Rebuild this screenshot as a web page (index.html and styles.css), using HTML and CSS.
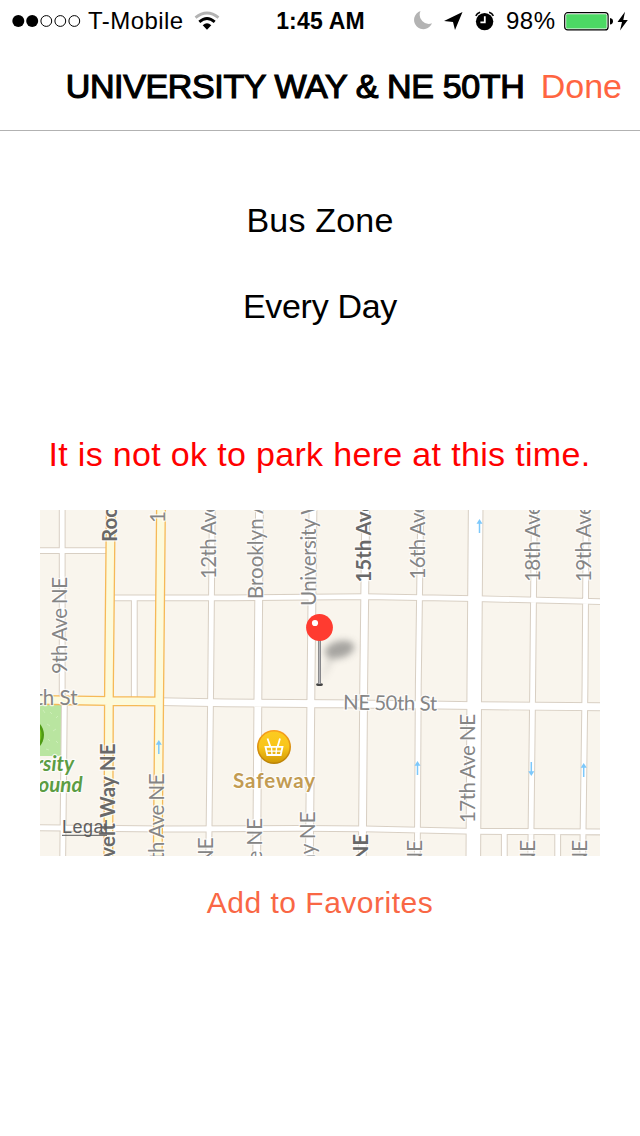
FILE: index.html
```html
<!DOCTYPE html>
<html lang="en">
<head>
<meta charset="utf-8">
<title>University Way &amp; NE 50th</title>
<link rel="stylesheet" href="styles.css">
</head>
<body>
<div class="status">
  <div class="status-left">
    <svg class="signal" width="70" height="14" viewBox="0 0 70 14"><circle cx="6.3" cy="7" r="6"/><circle cx="20.2" cy="7" r="6"/><g fill="none" stroke="#000"><circle cx="34.3" cy="7" r="5.4"/><circle cx="48.3" cy="7" r="5.4"/><circle cx="62.3" cy="7" r="5.4"/></g></svg>
    <span class="carrier">T-Mobile</span>
    <svg class="wifi" width="26" height="20" viewBox="0 0 26 20"><g fill="none"><path d="M1.5 6.7Q13-2.7 24.5 6.7" stroke="#b3b3b3" stroke-width="2.8"/><path d="M5.3 10.9Q13 4 20.7 10.9" stroke="#000" stroke-width="2.8"/></g><path d="M8.7 14.2Q13 10.4 17.3 14.2L13 18.7Z"/></svg>
  </div>
  <span class="clock">1:45 AM</span>
  <div class="status-right">
    <svg class="glyphs" width="84" height="22" viewBox="0 0 84 22"><path d="M7.5 1A9.3 9.3 0 1 0 19 13.3A9.2 9.2 0 0 1 7.5 1Z" fill="#b3b3b3"/><path d="M49.5 2L42 20L40 12L31 11Z"/><circle cx="71.6" cy="11.6" r="8.7"/><path d="M62.8 5.9Q64 3 67.1 2.2M80.4 5.9Q79.2 3 76.1 2.2" fill="none" stroke="#000" stroke-width="1.5"/><path d="M71.8 6.2V12.3H67.4" fill="none" stroke="#fff" stroke-width="1.8"/></svg>
    <span class="percent">98%</span>
    <svg class="battery" width="66" height="22" viewBox="0 0 66 22"><rect x=".7" y="2.7" width="43.4" height="17.2" rx="3" fill="#fff" stroke="#000" stroke-width="1.2"/><rect x="2.2" y="4.2" width="40.4" height="14.2" rx="1" fill="#4cd964"/><path d="M46 8Q49 8.5 49 11.3T46 14.6Z"/><path d="M61 1.8L53.5 12H58L56 20.6L63.8 10H59.3Z"/></svg>
  </div>
</div>
<header class="navbar">
  <h1 class="title">UNIVERSITY WAY &amp; NE 50TH</h1>
  <a class="done">Done</a>
</header>
<main class="content">
  <p class="zone">Bus Zone</p>
  <p class="days">Every Day</p>
  <p class="warning">It is not ok to park here at this time.</p>
  <svg class="map" width="560" height="346" viewBox="40 510 560 346">
    <defs>
      <linearGradient id="gold" x1="0" y1="0" x2="0" y2="1"><stop offset="0" stop-color="#fccb20"/><stop offset=".5" stop-color="#f8c51b"/><stop offset="1" stop-color="#d39b05"/></linearGradient>
      <linearGradient id="rim" x1="0" y1="0" x2="0" y2="1"><stop offset="0" stop-color="#fb9f1e"/><stop offset="1" stop-color="#b98205"/></linearGradient>
      <linearGradient id="needle"><stop offset="0" stop-color="#777"/><stop offset=".5" stop-color="#b5b5b9"/><stop offset="1" stop-color="#707074"/></linearGradient>
      <filter id="blur" x="-50%" y="-50%" width="200%" height="200%"><feGaussianBlur stdDeviation="3.8"/></filter>
      <g id="arrow"><path d="M0 14V2" stroke="#7cc8fb" stroke-width="1.5"/><path d="M-3 4.8L0 0L3 4.8Z" fill="#7cc8fb"/></g>
      <g id="streets" fill="none">
        <path class="w4" d="M62.2 505V700M64.4 700L62.7 860M134.3 598V700M212.3 505L210.7 685L208.7 860M420.8 505L418.3 685L417.3 860M534.4 505L532.7 685L530.7 860M586.2 505L585 685L582.7 860M504.3 832V860M557.7 832V860M35 550.6H108M112 597.8H230L365 596.7L475 598.7L605 601.7M35 827.7L163 829L300 828.4L365 828.9L475 831.3L605 832"/>
        <path class="w7" d="M259.5 505L258 685L256.7 860M313 505L311 685L309.4 860M365.8 505L363.7 685L362.3 860M160 701.7L225 702.9L365 704L475 705.7L605 706.8"/>
        <path class="w14" d="M475.7 505L474.3 685L473.3 860"/>
      </g>
      <path id="arterials" fill="none" d="M110.8 505L109 685L108.3 860M161 505L159.3 685L157.7 860M35 699.8L109 701L160 701.5"/>
    </defs>
    <rect x="40" y="510" width="560" height="346" fill="#f9f5ed"/>
    <path d="M40 704H62V756H40Z" fill="#b9e5a0"/>
    <path d="M43 710l2 3m5-1l2 2m4 4l2-2m-11 8l3 2m3 5l3-2m-8 10l2 2m6 0l2 2m-12 6l3 1" stroke="#cdeeb8"/>
    <use href="#streets" class="casing"/>
    <use href="#streets" class="road"/>
    <use href="#arterials" stroke="#f6b957" stroke-width="10"/>
    <use href="#arterials" stroke="#fdfadb" stroke-width="7.4"/>
    <circle cx="27" cy="735" r="17" fill="#4f9a14"/><circle cx="27" cy="735" r="14.5" fill="#75c31d"/>
    <use href="#arrow" x="158.8" y="740"/><use href="#arrow" x="479.5" y="519"/><use href="#arrow" x="417.5" y="761"/><use href="#arrow" x="583.7" y="763"/><use href="#arrow" transform="translate(531.3 776) scale(1 -1)"/>
    <g class="label">
      <text transform="translate(66.5 674) rotate(-90)" textLength="97">9th Ave NE</text>
      <text class="major" transform="translate(116.5 542) rotate(-90)">Roosevelt</text>
      <text transform="translate(165 523) rotate(-90)">11th Ave NE</text>
      <text transform="translate(216.3 579) rotate(-90)" textLength="108">12th Ave NE</text>
      <text transform="translate(263.3 599) rotate(-90)">Brooklyn Ave</text>
      <text transform="translate(316.3 606) rotate(-90)" textLength="131">University Way</text>
      <text class="major" transform="translate(371 582.5) rotate(-90)" textLength="114">15th Ave NE</text>
      <text transform="translate(425 579.5) rotate(-90)" textLength="108">16th Ave NE</text>
      <text transform="translate(539.5 582) rotate(-90)" textLength="109">18th Ave NE</text>
      <text transform="translate(591.3 582) rotate(-90)" textLength="109">19th Ave NE</text>
      <text transform="translate(475.3 823) rotate(-90)" textLength="109">17th Ave NE</text>
      <g class="end">
        <text class="major" transform="translate(114.8 743.5) rotate(-90)" textLength="171">Roosevelt Way NE</text>
        <text transform="translate(163.5 773.5) rotate(-90)" textLength="109">11th Ave NE</text>
        <text transform="translate(213.3 837.5) rotate(-90)">12th Ave NE</text>
        <text transform="translate(262.3 818) rotate(-90)">Brooklyn Ave NE</text>
        <text transform="translate(314.8 811.5) rotate(-90)">University Way NE</text>
        <text class="major" transform="translate(368 834) rotate(-90)">15th Ave NE</text>
        <text transform="translate(422 840) rotate(-90)">16th Ave NE</text>
        <text transform="translate(535.3 840) rotate(-90)">18th Ave NE</text>
        <text transform="translate(587.3 840) rotate(-90)">19th Ave NE</text>
        <text x="77.5" y="705">NE 50th St</text>
      </g>
      <text transform="translate(343 709.5) rotate(.7)" textLength="94">NE 50th St</text>
      <text class="shop" x="233" y="787.5" textLength="82">Safeway</text>
      <text class="park end" x="74" y="771">University</text>
      <text class="park end" x="82.5" y="791.5">Playground</text>
    </g>
    <circle cx="274" cy="747" r="17" fill="url(#rim)"/><circle cx="274" cy="747" r="15.4" fill="url(#gold)"/>
    <path d="M265.5 746.8H282.5L280.7 755H267.3ZM267.5 738.5L270.5 747M280 738.5L277.5 747" fill="none" stroke="#fff" stroke-width="1.8"/><path d="M266 751.1H282M271.5 747L272 755M276.6 747L276 755" stroke="#fff" stroke-width="1.4"/>
    <text class="legal" x="62" y="833" textLength="46">Legal</text><path d="M62 835.3H107" stroke="#555"/>
    <g filter="url(#blur)" fill="#555" opacity=".5"><ellipse cx="339.5" cy="649.5" rx="15" ry="8.5" transform="rotate(-14 339.5 649.5)"/><path d="M329 656L320 684L335 657Z" opacity=".4"/></g>
    <ellipse cx="319.5" cy="684.5" rx="3.4" ry="1.5" fill="#444"/>
    <rect x="318" y="638" width="3" height="46" fill="url(#needle)"/>
    <circle cx="319.5" cy="627.5" r="13.4" fill="#ff3b30"/><circle cx="315" cy="623" r="3.1" fill="#fff"/>
  </svg>
  <a class="favorite">Add to Favorites</a>
</main>
</body>
</html>
```
FILE: styles.css
```css
* { box-sizing: border-box; }
body {
  margin: 0;
  width: 640px;
  height: 1136px;
  overflow: hidden;
  background: #fff;
  color: #000;
  font-family: "Liberation Sans", Arial, sans-serif;
}
.status {
  display: grid;
  grid-template-columns: 1fr auto 1fr;
  align-items: center;
  height: 40px;
  padding: 2px 10px 0 12px;
  font-size: 24px;
  white-space: nowrap;
}
.status-left, .status-right { display: flex; align-items: center; }
.status-right { justify-content: flex-end; }
.signal { margin: 0 6px 1px 0; }
.carrier { width: 99px; margin-right: 7px; letter-spacing: .45px; }
.wifi, .glyphs, .battery { margin-bottom: 1px; }
.clock { margin-right: 1px; font-weight: 700; font-size: 23px; letter-spacing: .2px; }
.glyphs { margin-right: 9px; }
.percent { width: 50px; margin-right: 8px; letter-spacing: .5px; }
.navbar {
  display: flex;
  justify-content: flex-end;
  align-items: center;
  height: 91px;
  padding: 2px 18px 0 0;
  border-bottom: 1px solid #b2b2b2;
  font-size: 34px;
  white-space: nowrap;
}
.title {
  width: 475px;
  margin: 0;
  font-size: 34px;
  font-weight: 400;
  letter-spacing: -.36px;
  -webkit-text-stroke: 1.2px #000;
}
.done { color: #ff6541; }
.content {
  display: flex;
  flex-direction: column;
  align-items: center;
  padding-top: 69px;
  font-size: 34px;
  line-height: 40px;
  white-space: nowrap;
}
.content p { margin: 0; }
.zone { letter-spacing: .2px; }
.content .days { margin-top: 46px; letter-spacing: -.3px; }
.content .warning { margin-top: 108px; margin-right: 1px; color: #f00; letter-spacing: .33px; }
.map { display: block; margin-top: 36px; }
.favorite { margin-top: 27px; font-size: 30px; color: #f96745; letter-spacing: .5px; }
.w4 { stroke-width: 4.8px; }
.w7 { stroke-width: 6.8px; }
.w14 { stroke-width: 13.6px; }
.casing {
  stroke: #d8cfc3;
  filter: drop-shadow(1px 1px 0 #d8cfc3) drop-shadow(-1px -1px 0 #d8cfc3);
}
.road { stroke: #fff; }
.label {
  font-family: Lato, "Open Sans", sans-serif;
  font-size: 20.5px;
  fill: #858585;
  stroke: #fff;
  stroke-width: 2.4px;
  stroke-linejoin: round;
  stroke-opacity: .75;
  paint-order: stroke;
}
.end { text-anchor: end; }
.major { font-weight: 700; fill: #696969; }
.shop { font-weight: 700; fill: #c29b52; }
.park { font-weight: 700; font-style: italic; fill: #5c9c43; }
.legal { font-size: 18px; fill: #606060; }
```
